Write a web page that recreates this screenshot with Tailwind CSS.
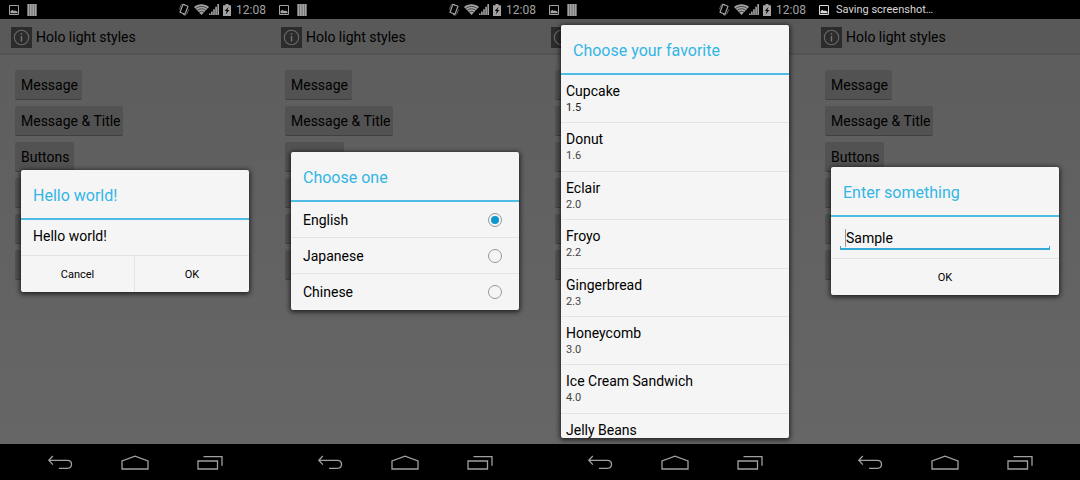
<!DOCTYPE html>
<html lang="en">
<head>
<meta charset="utf-8">
<title>Holo light styles</title>
<script src="https://cdn.jsdelivr.net/npm/@tailwindcss/browser@4"></script>
</head>
<body class="bg-black font-['Roboto',sans-serif] text-sm text-black">
<svg class="hidden" aria-hidden="true">
  <symbol id="picture" viewBox="0 0 10 10">
    <path d="M.5.5h9v9h-9z" fill="none" stroke="currentColor"/>
    <path d="M1.500 8.200V6.200l1.800-1.400 1.500 1.300 1-.700 2.700 1.200v1.600z" fill="currentColor"/>
  </symbol>
  <symbol id="bars" viewBox="0 0 10 12">
    <path d="M.5 0h9v12h-9z" fill="#6c6c6c"/>
    <path d="M1.300 0v12M3.800 0v12M6.300 0v12M8.700 0v12" stroke="currentColor" stroke-width="1.600"/>
  </symbol>
  <symbol id="rotate" viewBox="0 0 12 13">
    <path d="M5 1.300 10 3.200 7 11.200 2 9.300z" fill="none" stroke="currentColor" stroke-width="1.200" stroke-linejoin="round"/>
    <path d="M3.500 1.300 1.300 6.500M8.500 11.500 10.800 6.500" fill="none" stroke="currentColor" stroke-width=".6"/>
    <path d="M4.600 1.200 7 2M5 11.400l2.400.8" fill="none" stroke="currentColor" stroke-width="1"/>
  </symbol>
  <symbol id="wifi" viewBox="0 0 15 11">
    <path d="M0 3C4-.6 11-.6 15 3L7.500 11z" fill="currentColor"/>
    <path d="M1.500 4.700c3.500-3 8.500-3 12 0M3.100 6.500c2.700-2.200 6.100-2.200 8.800 0M4.900 8.300c1.600-1.200 3.600-1.200 5.200 0" fill="none" stroke="#000" stroke-width=".6"/>
  </symbol>
  <symbol id="signal" viewBox="0 0 10 11">
    <path d="M0 11V9.500h1.600V11zM2.100 11V7.500h1.600V11zM4.200 11V5.200h1.600V11zM6.300 11V2.800h1.600V11zM8.400 11V0H10v11z" fill="currentColor"/>
  </symbol>
  <symbol id="battery" viewBox="0 0 8 12">
    <path d="M2.500 0h3v1.200H8V12H0V1.200h2.500z" fill="currentColor"/>
    <path d="M5.600 2.800 1.800 7h2L2.600 10.400 6.400 6h-2z" fill="#000"/>
  </symbol>
  <symbol id="info" viewBox="0 0 21 21">
    <path d="M0 0h21v21H0z" fill="#2c2c2c"/>
    <circle cx="10.500" cy="10.500" r="7.200" fill="none" stroke="#6a6a6a" stroke-width="1.100"/>
    <path d="M10.500 9v5.500M10.500 6.200v1.500" stroke="#757575" stroke-width="1.400"/>
  </symbol>
  <symbol id="back" viewBox="0 0 26 15">
    <path d="M5.800 1 1.800 5.300 5.800 9.600M2 5.300H20.500q4 0 4 4t-4 4H12" fill="none" stroke="currentColor" stroke-width="1.300"/>
  </symbol>
  <symbol id="home" viewBox="0 0 28 15">
    <path d="M1 14V6L14 1.200 27 6v8z" fill="none" stroke="currentColor" stroke-width="1.300"/>
  </symbol>
  <symbol id="recent" viewBox="0 0 26 15">
    <path d="M1 6h19.500v8H1zM6.500 1.700H25v9" fill="none" stroke="currentColor" stroke-width="1.300"/>
  </symbol>
</svg>

<main class="grid h-screen grid-cols-4">

  <section class="flex min-w-0 flex-col">
    <header class="flex h-[19px] shrink-0 items-center bg-black pr-1 pl-[9px] text-[#a3a3a3]">
      <svg class="size-2.5"><use href="#picture"/></svg>
      <svg class="ml-2 h-3 w-2.5"><use href="#bars"/></svg>
      <svg class="ml-auto h-[13px] w-3"><use href="#rotate"/></svg>
      <svg class="ml-1 h-[11px] w-[15px]"><use href="#wifi"/></svg>
      <svg class="h-[11px] w-2.5"><use href="#signal"/></svg>
      <svg class="ml-1 h-3 w-2"><use href="#battery"/></svg>
      <span class="ml-[5px] text-xs">12:08</span>
    </header>
    <div class="relative flex min-h-0 grow flex-col bg-linear-to-b from-[#5d5d5d] to-[#666]">
      <div class="flex h-9 shrink-0 items-center gap-1 border-b-2 border-[#535353] bg-[#595959] pt-0.5 pl-[11px]">
        <svg class="size-[21px]"><use href="#info"/></svg>
        <h1>Holo light styles</h1>
      </div>
      <div class="flex flex-col items-start gap-1.5 px-[15px] pt-[15px]">
        <button class="h-[30px] w-[67px] rounded-xs border-b border-[#404040] bg-[#525252] pt-px pl-1.5 text-left whitespace-nowrap">Message</button>
        <button class="h-[30px] w-27 rounded-xs border-b border-[#404040] bg-[#525252] pt-px pl-1.5 text-left whitespace-nowrap">Message &amp; Title</button>
        <button class="h-[30px] w-[59px] rounded-xs border-b border-[#404040] bg-[#525252] pt-px pl-1.5 text-left whitespace-nowrap">Buttons</button>
        <button class="h-[30px] w-[59px] rounded-xs border-b border-[#404040] bg-[#525252]"></button>
        <button class="h-[30px] w-[59px] rounded-xs border-b border-[#404040] bg-[#525252]"></button>
        <button class="h-[30px] w-[59px] rounded-xs border-b border-[#404040] bg-[#525252]"></button>
      </div>
      <div class="absolute inset-0 flex items-center px-[21px] pt-1.5 pb-[7px]">
        <div role="dialog" aria-label="Hello world!" class="w-full rounded-xs bg-[#f5f5f5] shadow-[0_1px_5px_1px_rgba(0,0,0,0.7)]">
          <h2 class="flex h-[50px] items-center border-b-2 border-[#4fbce6] px-3 pt-[3px] text-base text-[#33b5e5]">Hello world!</h2>
          <p class="flex h-[35px] items-center px-3 pb-1">Hello world!</p>
          <div class="grid h-[37px] grid-cols-2 divide-x divide-[#e4e4e4] border-t border-[#e4e4e4] text-[11px]">
            <button class="pt-0.5">Cancel</button>
            <button class="pt-0.5">OK</button>
          </div>
        </div>
      </div>
    </div>
    <nav class="flex h-9 shrink-0 items-center justify-center gap-12 bg-black text-[#a0a0a0]">
      <button aria-label="Back"><svg class="h-[15px] w-[26px]"><use href="#back"/></svg></button>
      <button aria-label="Home"><svg class="h-[15px] w-7"><use href="#home"/></svg></button>
      <button aria-label="Recent apps"><svg class="h-[15px] w-[26px]"><use href="#recent"/></svg></button>
    </nav>
  </section>

  <section class="flex min-w-0 flex-col">
    <header class="flex h-[19px] shrink-0 items-center bg-black pr-1 pl-[9px] text-[#a3a3a3]">
      <svg class="size-2.5"><use href="#picture"/></svg>
      <svg class="ml-2 h-3 w-2.5"><use href="#bars"/></svg>
      <svg class="ml-auto h-[13px] w-3"><use href="#rotate"/></svg>
      <svg class="ml-1 h-[11px] w-[15px]"><use href="#wifi"/></svg>
      <svg class="h-[11px] w-2.5"><use href="#signal"/></svg>
      <svg class="ml-1 h-3 w-2"><use href="#battery"/></svg>
      <span class="ml-[5px] text-xs">12:08</span>
    </header>
    <div class="relative flex min-h-0 grow flex-col bg-linear-to-b from-[#5d5d5d] to-[#666]">
      <div class="flex h-9 shrink-0 items-center gap-1 border-b-2 border-[#535353] bg-[#595959] pt-0.5 pl-[11px]">
        <svg class="size-[21px]"><use href="#info"/></svg>
        <h1>Holo light styles</h1>
      </div>
      <div class="flex flex-col items-start gap-1.5 px-[15px] pt-[15px]">
        <button class="h-[30px] w-[67px] rounded-xs border-b border-[#404040] bg-[#525252] pt-px pl-1.5 text-left whitespace-nowrap">Message</button>
        <button class="h-[30px] w-27 rounded-xs border-b border-[#404040] bg-[#525252] pt-px pl-1.5 text-left whitespace-nowrap">Message &amp; Title</button>
        <button class="h-[30px] w-[59px] rounded-xs border-b border-[#404040] bg-[#525252]"></button>
        <button class="h-[30px] w-[59px] rounded-xs border-b border-[#404040] bg-[#525252]"></button>
        <button class="h-[30px] w-[59px] rounded-xs border-b border-[#404040] bg-[#525252]"></button>
        <button class="h-[30px] w-[59px] rounded-xs border-b border-[#404040] bg-[#525252]"></button>
      </div>
      <div class="absolute inset-0 flex items-center px-[21px] pt-1.5 pb-[7px]">
        <div role="dialog" aria-label="Choose one" class="w-full rounded-xs bg-[#f5f5f5] shadow-[0_1px_5px_1px_rgba(0,0,0,0.7)]">
          <h2 class="flex h-[50px] items-center border-b-2 border-[#4fbce6] px-3 pt-[3px] text-base text-[#33b5e5]">Choose one</h2>
          <div class="grid h-27 grid-rows-3 divide-y divide-[#e4e4e4]">
            <label class="flex items-center justify-between pr-[17px] pl-3">English
              <input type="radio" name="language" checked class="size-[14px] appearance-none rounded-full border border-[#8a9ba3] bg-[#e3f1f7] checked:bg-[#0d97cc] checked:bg-clip-content checked:p-0.5">
            </label>
            <label class="flex items-center justify-between pr-[17px] pl-3">Japanese
              <input type="radio" name="language" class="size-[14px] appearance-none rounded-full border border-[#999]">
            </label>
            <label class="flex items-center justify-between pr-[17px] pl-3">Chinese
              <input type="radio" name="language" class="size-[14px] appearance-none rounded-full border border-[#999]">
            </label>
          </div>
        </div>
      </div>
    </div>
    <nav class="flex h-9 shrink-0 items-center justify-center gap-12 bg-black text-[#a0a0a0]">
      <button aria-label="Back"><svg class="h-[15px] w-[26px]"><use href="#back"/></svg></button>
      <button aria-label="Home"><svg class="h-[15px] w-7"><use href="#home"/></svg></button>
      <button aria-label="Recent apps"><svg class="h-[15px] w-[26px]"><use href="#recent"/></svg></button>
    </nav>
  </section>

  <section class="flex min-w-0 flex-col">
    <header class="flex h-[19px] shrink-0 items-center bg-black pr-1 pl-[9px] text-[#a3a3a3]">
      <svg class="size-2.5"><use href="#picture"/></svg>
      <svg class="ml-2 h-3 w-2.5"><use href="#bars"/></svg>
      <svg class="ml-auto h-[13px] w-3"><use href="#rotate"/></svg>
      <svg class="ml-1 h-[11px] w-[15px]"><use href="#wifi"/></svg>
      <svg class="h-[11px] w-2.5"><use href="#signal"/></svg>
      <svg class="ml-1 h-3 w-2"><use href="#battery"/></svg>
      <span class="ml-[5px] text-xs">12:08</span>
    </header>
    <div class="relative flex min-h-0 grow flex-col bg-linear-to-b from-[#5d5d5d] to-[#666]">
      <div class="flex h-9 shrink-0 items-center border-b-2 border-[#535353] bg-[#595959] pt-0.5 pl-[11px]">
        <svg class="size-[21px]"><use href="#info"/></svg>
      </div>
      <div class="flex flex-col items-start gap-1.5 px-[15px] pt-[15px]">
        <button class="h-[30px] w-[59px] rounded-xs border-b border-[#404040] bg-[#525252]"></button>
        <button class="h-[30px] w-[59px] rounded-xs border-b border-[#404040] bg-[#525252]"></button>
        <button class="h-[30px] w-[59px] rounded-xs border-b border-[#404040] bg-[#525252]"></button>
        <button class="h-[30px] w-[59px] rounded-xs border-b border-[#404040] bg-[#525252]"></button>
        <button class="h-[30px] w-[59px] rounded-xs border-b border-[#404040] bg-[#525252]"></button>
        <button class="h-[30px] w-[59px] rounded-xs border-b border-[#404040] bg-[#525252]"></button>
      </div>
      <div class="absolute inset-0 flex items-center px-[21px] pt-1.5 pb-1.5">
        <div role="dialog" aria-label="Choose your favorite" class="max-h-full w-full overflow-hidden rounded-xs bg-[#f5f5f5] shadow-[0_1px_5px_1px_rgba(0,0,0,0.7)]">
          <h2 class="flex h-[50px] items-center border-b-2 border-[#4fbce6] px-3 pt-[3px] text-base text-[#33b5e5]">Choose your favorite</h2>
          <ul class="grid h-[387px] grid-rows-8 divide-y divide-[#e4e4e4]">
            <li class="px-[5px] pt-2 leading-4"><p>Cupcake</p><p class="text-[11px] leading-[18px] text-[#222]">1.5</p></li>
            <li class="px-[5px] pt-2 leading-4"><p>Donut</p><p class="text-[11px] leading-[18px] text-[#444]">1.6</p></li>
            <li class="px-[5px] pt-2 leading-4"><p>Eclair</p><p class="text-[11px] leading-[18px] text-[#444]">2.0</p></li>
            <li class="px-[5px] pt-2 leading-4"><p>Froyo</p><p class="text-[11px] leading-[18px] text-[#444]">2.2</p></li>
            <li class="px-[5px] pt-2 leading-4"><p>Gingerbread</p><p class="text-[11px] leading-[18px] text-[#444]">2.3</p></li>
            <li class="px-[5px] pt-2 leading-4"><p>Honeycomb</p><p class="text-[11px] leading-[18px] text-[#444]">3.0</p></li>
            <li class="px-[5px] pt-2 leading-4"><p>Ice Cream Sandwich</p><p class="text-[11px] leading-[18px] text-[#444]">4.0</p></li>
            <li class="px-[5px] pt-2 leading-4"><p>Jelly Beans</p></li>
          </ul>
        </div>
      </div>
    </div>
    <nav class="flex h-9 shrink-0 items-center justify-center gap-12 bg-black text-[#a0a0a0]">
      <button aria-label="Back"><svg class="h-[15px] w-[26px]"><use href="#back"/></svg></button>
      <button aria-label="Home"><svg class="h-[15px] w-7"><use href="#home"/></svg></button>
      <button aria-label="Recent apps"><svg class="h-[15px] w-[26px]"><use href="#recent"/></svg></button>
    </nav>
  </section>

  <section class="flex min-w-0 flex-col">
    <header class="flex h-[19px] shrink-0 items-center bg-black pl-[9px] text-[#d8d8d8]">
      <svg class="size-2.5"><use href="#picture"/></svg>
      <span class="ml-[7px] text-[11px]">Saving screenshot…</span>
    </header>
    <div class="relative flex min-h-0 grow flex-col bg-linear-to-b from-[#5d5d5d] to-[#666]">
      <div class="flex h-9 shrink-0 items-center gap-1 border-b-2 border-[#535353] bg-[#595959] pt-0.5 pl-[11px]">
        <svg class="size-[21px]"><use href="#info"/></svg>
        <h1>Holo light styles</h1>
      </div>
      <div class="flex flex-col items-start gap-1.5 px-[15px] pt-[15px]">
        <button class="h-[30px] w-[67px] rounded-xs border-b border-[#404040] bg-[#525252] pt-px pl-1.5 text-left whitespace-nowrap">Message</button>
        <button class="h-[30px] w-27 rounded-xs border-b border-[#404040] bg-[#525252] pt-px pl-1.5 text-left whitespace-nowrap">Message &amp; Title</button>
        <button class="h-[30px] w-[59px] rounded-xs border-b border-[#404040] bg-[#525252] pt-px pl-1.5 text-left whitespace-nowrap">Buttons</button>
        <button class="h-[30px] w-[59px] rounded-xs border-b border-[#404040] bg-[#525252]"></button>
        <button class="h-[30px] w-[59px] rounded-xs border-b border-[#404040] bg-[#525252]"></button>
        <button class="h-[30px] w-[59px] rounded-xs border-b border-[#404040] bg-[#525252]"></button>
      </div>
      <div class="absolute inset-0 flex items-center px-[21px] pt-1.5 pb-[7px]">
        <div role="dialog" aria-label="Enter something" class="w-full rounded-xs bg-[#f5f5f5] shadow-[0_1px_5px_1px_rgba(0,0,0,0.7)]">
          <h2 class="flex h-[50px] items-center border-b-2 border-[#4fbce6] px-3 pt-[3px] text-base text-[#33b5e5]">Enter something</h2>
          <div class="flex h-[41px] flex-col px-[9px] pt-[11px]">
            <div class="flex h-5 items-center pl-[5px]">
              <span class="h-[18px] w-px bg-[#999]"></span>
              <input type="text" value="Sample" aria-label="Enter something" class="min-w-0 grow bg-transparent outline-none">
            </div>
            <div class="-mt-0.5 h-1 border-x border-b-2 border-[#33a9d6]"></div>
          </div>
          <div class="flex h-[37px] border-t border-[#e4e4e4] text-[11px]">
            <button class="grow pt-0.5">OK</button>
          </div>
        </div>
      </div>
    </div>
    <nav class="flex h-9 shrink-0 items-center justify-center gap-12 bg-black text-[#a0a0a0]">
      <button aria-label="Back"><svg class="h-[15px] w-[26px]"><use href="#back"/></svg></button>
      <button aria-label="Home"><svg class="h-[15px] w-7"><use href="#home"/></svg></button>
      <button aria-label="Recent apps"><svg class="h-[15px] w-[26px]"><use href="#recent"/></svg></button>
    </nav>
  </section>

</main>
</body>
</html>
